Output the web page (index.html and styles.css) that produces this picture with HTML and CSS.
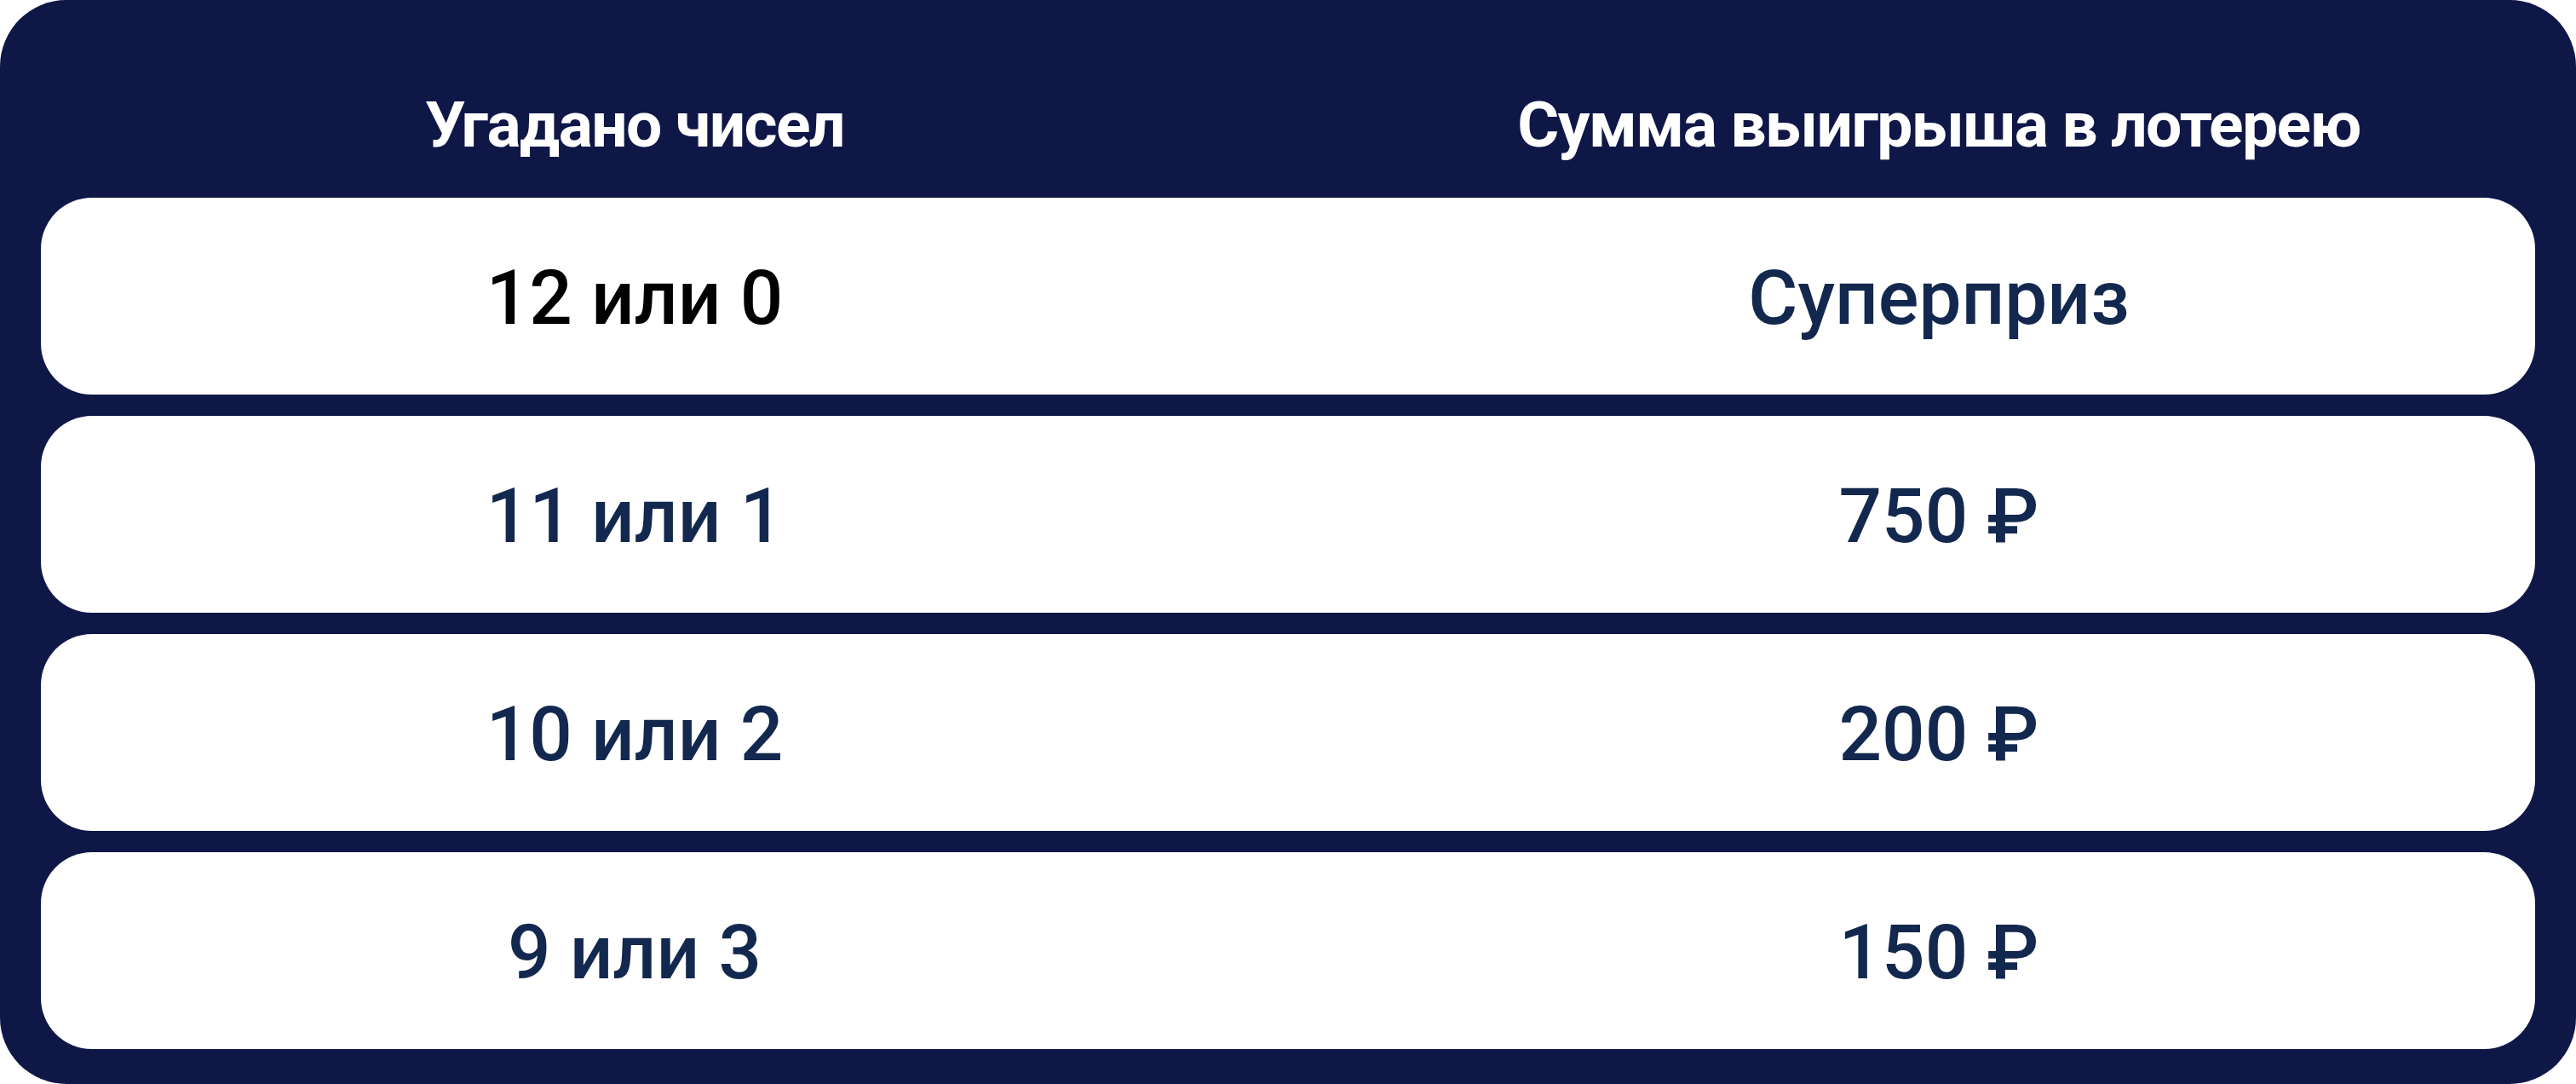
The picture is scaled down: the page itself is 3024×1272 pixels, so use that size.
FILE: index.html
```html
<!DOCTYPE html>
<html lang="ru">
<head>
<meta charset="utf-8">
<title>Таблица выигрышей</title>
<link rel="stylesheet" href="styles.css">
</head>
<body>
<div class="board">
  <div class="head">
    <div class="cell">Угадано чисел</div>
    <div class="cell">Сумма выигрыша в лотерею</div>
  </div>
  <div class="row">
    <div class="cell first">12 или 0</div>
    <div class="cell">Суперприз</div>
  </div>
  <div class="row">
    <div class="cell">11 или 1</div>
    <div class="cell">750 ₽</div>
  </div>
  <div class="row">
    <div class="cell">10 или 2</div>
    <div class="cell">200 ₽</div>
  </div>
  <div class="row">
    <div class="cell">9 или 3</div>
    <div class="cell">150 ₽</div>
  </div>
</div>
</body>
</html>
```
FILE: styles.css
```css
html, body {
  margin: 0;
  padding: 0;
  background: #ffffff;
}
body {
  font-family: Roboto, "Noto Sans", "Liberation Sans", sans-serif;
}
.board {
  width: 3024px;
  height: 1272px;
  box-sizing: border-box;
  background: #0f1747;
  border-radius: 78px;
  padding: 0 48px 41px;
  display: flex;
  flex-direction: column;
  gap: 25px;
}
.head, .row {
  display: grid;
  grid-template-columns: 1394px 1400px;
  column-gap: 134px;
  align-items: center;
}
.head {
  height: 232px;
  box-sizing: border-box;
  padding-top: 60px;
  margin-bottom: -25px;
  color: #ffffff;
  font-size: 75px;
  font-weight: 700;
  letter-spacing: -1.6px;
  line-height: 1;
}
.row {
  height: 231px;
  background: #ffffff;
  border-radius: 60px;
  color: #13284e;
  font-size: 89px;
  font-weight: 500;
  line-height: 1;
  padding-top: 4px;
  box-sizing: border-box;
}
.cell {
  text-align: center;
  white-space: nowrap;
}
.first {
  color: #000000;
}
```
